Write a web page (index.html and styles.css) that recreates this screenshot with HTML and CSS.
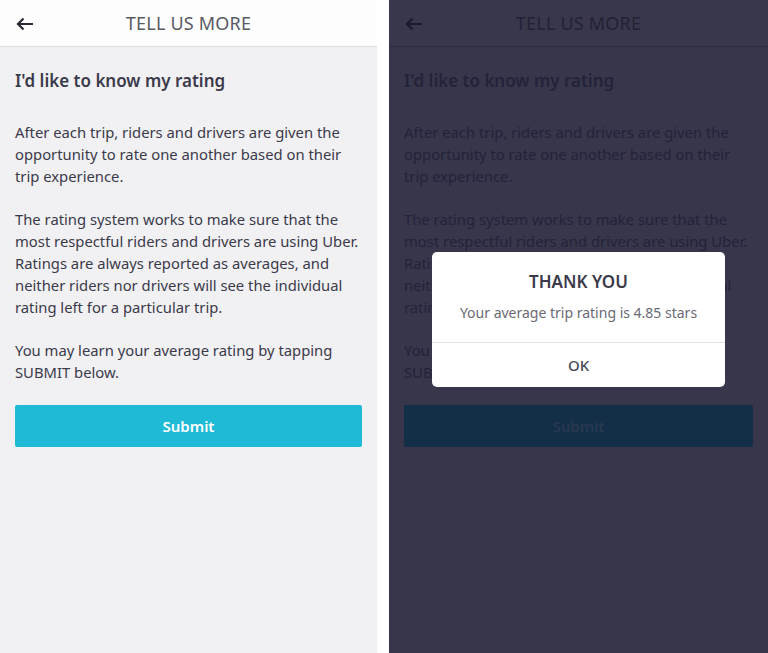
FILE: index.html
```html
<!DOCTYPE html>
<html lang="en">
<head>
  <meta charset="UTF-8">
  <meta name="viewport" content="width=device-width, initial-scale=1.0">
  <title>Tell Us More</title>
  <link rel="stylesheet" href="styles.css">
</head>
<body>
  <div class="screens">
    <div class="phone">
      <div class="topbar">
        <svg class="back" width="18" height="14" viewBox="0 0 18 14"><path d="M17 7H2M7.5 1.5L2 7l5.5 5.5" fill="none" stroke="#2b2b38" stroke-width="2.2"/></svg>
        <div class="title">TELL US MORE</div>
      </div>
      <div class="content">
        <h2>I'd like to know my rating</h2>
        <p>After each trip, riders and drivers are given the opportunity to rate one another based on their trip experience.</p>
        <p>The rating system works to make sure that the most respectful riders and drivers are using Uber. Ratings are always reported as averages, and neither riders nor drivers will see the individual rating left for a particular trip.</p>
        <p>You may learn your average rating by tapping SUBMIT below.</p>
        <button class="submit">Submit</button>
      </div>
    </div>

    <div class="phone dimmed">
      <div class="topbar">
        <svg class="back" width="18" height="14" viewBox="0 0 18 14"><path d="M17 7H2M7.5 1.5L2 7l5.5 5.5" fill="none" stroke="#1c1b2b" stroke-width="2.2"/></svg>
        <div class="title">TELL US MORE</div>
      </div>
      <div class="content">
        <h2>I'd like to know my rating</h2>
        <p>After each trip, riders and drivers are given the opportunity to rate one another based on their trip experience.</p>
        <p>The rating system works to make sure that the most respectful riders and drivers are using Uber. Ratings are always reported as averages, and neither riders nor drivers will see the individual rating left for a particular trip.</p>
        <p>You may learn your average rating by tapping SUBMIT below.</p>
        <button class="submit">Submit</button>
      </div>

      <div class="dialog">
        <div class="dialog-body">
          <div class="dialog-title">THANK YOU</div>
          <div class="dialog-text">Your average trip rating is 4.85 stars</div>
        </div>
        <div class="dialog-ok">OK</div>
      </div>
    </div>
  </div>
</body>
</html>
```

FILE: styles.css
```css
body {
  margin: 0;
  background-color: #ffffff;
  font-family: "Noto Sans", Arial, sans-serif;
  color: #3b3a4a;
}
.screens {
  display: flex;
  gap: 12px;
  height: 653px;
}
.phone {
  position: relative;
  width: 377px;
  background-color: #f1f1f3;
}
.phone.dimmed {
  width: 379px;
  background-color: #37364a;
  color: #24233a;
}
.topbar {
  position: relative;
  height: 46px;
  background-color: #fdfdfd;
  border-bottom: 1px solid #dcdce0;
  display: flex;
  align-items: center;
  justify-content: center;
}
.back {
  position: absolute;
  left: 16px;
  top: 17px;
}
.title {
  font-size: 18px;
  color: #5a5a66;
  letter-spacing: 0.2px;
}
.content {
  padding: 20px 15px 0 15px;
}
.dimmed p {
  padding-right: 2px;
}
h2 {
  margin: 0 0 26px 0;
  font-size: 17px;
  font-weight: 600;
  line-height: 28px;
}
p {
  margin: 0 0 21px 0;
  font-size: 14.8px;
  line-height: 22px;
}
.submit {
  display: block;
  width: 100%;
  height: 42px;
  margin-top: 22px;
  border: none;
  border-radius: 2px;
  background-color: #1fbad6;
  color: #ffffff;
  font-family: inherit;
  font-size: 15px;
  font-weight: 600;
}
.dimmed .topbar {
  background-color: #38374b;
  border-bottom-color: #2e2d3f;
}
.dimmed .title {
  color: #232235;
}
.dimmed .submit {
  background-color: #132f47;
  color: #283850;
}
.dialog {
  position: absolute;
  left: 43px;
  top: 252px;
  width: 293px;
  background-color: #ffffff;
  border-radius: 5px;
  color: #3b3a4a;
  text-align: center;
}
.dialog-body {
  padding: 17px 10px 19px 10px;
  border-bottom: 1px solid #e2e2e6;
}
.dialog-title {
  font-size: 17px;
  font-weight: 600;
  line-height: 26px;
}
.dialog-text {
  margin-top: 8px;
  font-size: 14px;
  color: #6a6a74;
  line-height: 20px;
}
.dialog-ok {
  height: 44px;
  line-height: 44px;
  font-size: 15px;
  font-weight: 500;
  color: #4a4a56;
}
```
